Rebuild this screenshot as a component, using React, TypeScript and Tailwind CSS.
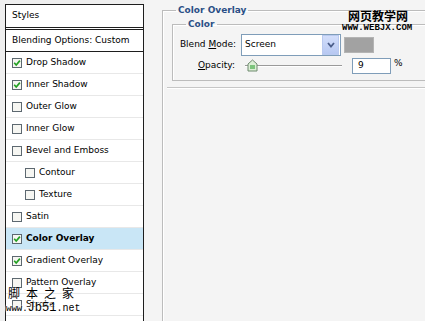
import React from "react";

type Item = { label: string; checked?: boolean; indent?: boolean; active?: boolean };

const items: Item[] = [
  { label: "Drop Shadow", checked: true },
  { label: "Inner Shadow", checked: true },
  { label: "Outer Glow" },
  { label: "Inner Glow" },
  { label: "Bevel and Emboss" },
  { label: "Contour", indent: true },
  { label: "Texture", indent: true },
  { label: "Satin" },
  { label: "Color Overlay", checked: true, active: true },
  { label: "Gradient Overlay", checked: true },
  { label: "Pattern Overlay" },
  { label: "Stroke" },
];

function Box({ checked }: { checked?: boolean }) {
  return (
    <svg width="10" height="10" viewBox="0 0 10 10" className="shrink-0">
      <rect x="0.5" y="0.5" width="9" height="9" fill="#f6f6f2" stroke="#5d6870" />
      {checked && (
        <path d="M2.2 4.8 L4.2 7 L7.9 2.6" fill="none" stroke="#22a022" strokeWidth="1.7" />
      )}
    </svg>
  );
}

export default function App() {
  return (
    <div className="relative flex h-[321px] w-[425px] overflow-hidden bg-[#f4f4f4] font-['DejaVu_Sans',sans-serif] text-[9px] text-black">
      {/* Left list */}
      <div className="w-[144px] shrink-0 bg-[#efefef] pl-[5px] pt-[4px]">
        <div className="h-[330px] border-x border-t border-[#1e1e1e] bg-white">
          <div className="flex h-[23px] items-center border-b border-[#1e1e1e] pl-[6px]">Styles</div>
          <div className="mt-[1px] flex h-[23px] items-center border-y border-[#1e1e1e] pl-[6px]">
            Blending Options: Custom
          </div>
          {items.map((it) => (
            <div
              key={it.label}
              className={`flex h-[22px] items-center gap-[4px] border-b border-[#e8e8e8] ${
                it.indent ? "pl-[19px]" : "pl-[6px]"
              } ${it.active ? "bg-[#c9e6f6] font-bold" : ""}`}
            >
              <Box checked={it.checked} />
              <span>{it.label}</span>
            </div>
          ))}
        </div>
      </div>

      {/* Right panel */}
      <div className="relative flex-1 overflow-hidden">
        <fieldset className="ml-[18px] mt-[4px] h-[340px] w-[320px] border-l border-t border-[#bcbcbc] shadow-[inset_1px_1px_0_#ffffff]">
          <legend className="ml-[13px] px-[2px] text-[9px] font-bold leading-[12px] text-[#2b4f86]">
            Color Overlay
          </legend>
          <fieldset className="ml-[9px] mt-[2px] w-[300px] border-y border-l border-[#bcbcbc] pb-[6px] pt-[4px] shadow-[inset_1px_1px_0_#ffffff]">
            <legend className="ml-[13px] px-[2px] text-[9px] font-bold leading-[12px] text-[#2b4f86]">
              Color
            </legend>
            <div className="flex h-[22px] items-center">
              <div className="w-[63px] text-right">
                Blend <span className="underline">M</span>ode:
              </div>
              <div className="ml-[5px] flex h-[22px] w-[100px] items-center border border-[#7f9db9] bg-white pl-[3px]">
                <span className="flex-1">Screen</span>
                <div className="mr-[1px] flex h-[20px] w-[17px] items-center justify-center border border-[#b9c9ef] bg-gradient-to-b from-[#d3defb] to-[#b7c8f2]">
                  <svg width="8" height="6" viewBox="0 0 8 6">
                    <path d="M1 1 L4 4.5 L7 1" fill="none" stroke="#4b5d8a" strokeWidth="1.8" />
                  </svg>
                </div>
              </div>
              <div className="ml-[3px] h-[16px] w-[30px] border border-[#b4b4b4] bg-[#a2a2a2]" />
            </div>
            <div className="mt-[2px] flex h-[16px] items-center">
              <div className="w-[62px] text-right">
                <span className="underline">O</span>pacity:
              </div>
              <div className="relative ml-[6px] h-[16px] w-[102px]">
                <div className="absolute left-[4px] right-[1px] top-[7px] h-[2px] border-t border-[#9a9a9a] bg-white" />
                <svg className="absolute left-[6px] top-[1px]" width="11" height="13" viewBox="0 0 11 13">
                  <path d="M1 5 L5.5 1 L10 5 L10 12 L1 12 Z" fill="#dcefd6" stroke="#6f8a6f" />
                  <rect x="3" y="6" width="5" height="4" fill="#7cc47c" />
                </svg>
              </div>
              <div className="ml-[9px] flex h-[16px] w-[39px] items-center border border-[#7f9db9] bg-white pl-[5px]">
                9
              </div>
              <span className="ml-[3px] -mt-[4px]">%</span>
            </div>
          </fieldset>
          <div className="ml-[4px] mt-[6px] h-[2px] border-t border-[#c6c6c6] bg-white" />
        </fieldset>
      </div>

      {/* Watermarks */}
      <div className="absolute left-[348px] top-[9px] font-['Noto_Sans_CJK_SC',sans-serif] text-[12px] font-bold leading-[13px]">
        网页教学网
      </div>
      <div className="absolute left-[342px] top-[24px] font-['Liberation_Mono',monospace] text-[9px] font-bold leading-[9px]">
        WWW.WEBJX.COM
      </div>
      <div className="absolute left-[8px] top-[286px] flex gap-[6px] font-['Noto_Sans_CJK_SC',sans-serif] text-[12px] leading-[14px]">
        <span>脚</span>
        <span>本</span>
        <span>之</span>
        <span>家</span>
      </div>
      <div className="absolute left-[6px] top-[302px] flex items-baseline font-['Liberation_Mono',monospace] leading-[13px] [text-shadow:0_0_2px_#fff,0_0_3px_#fff,0_0_3px_#fff]">
        <span className="text-[9px]">www.</span>
        <span className="text-[12px]">Jb51</span>
        <span className="text-[10px]">.net</span>
      </div>
    </div>
  );
}
